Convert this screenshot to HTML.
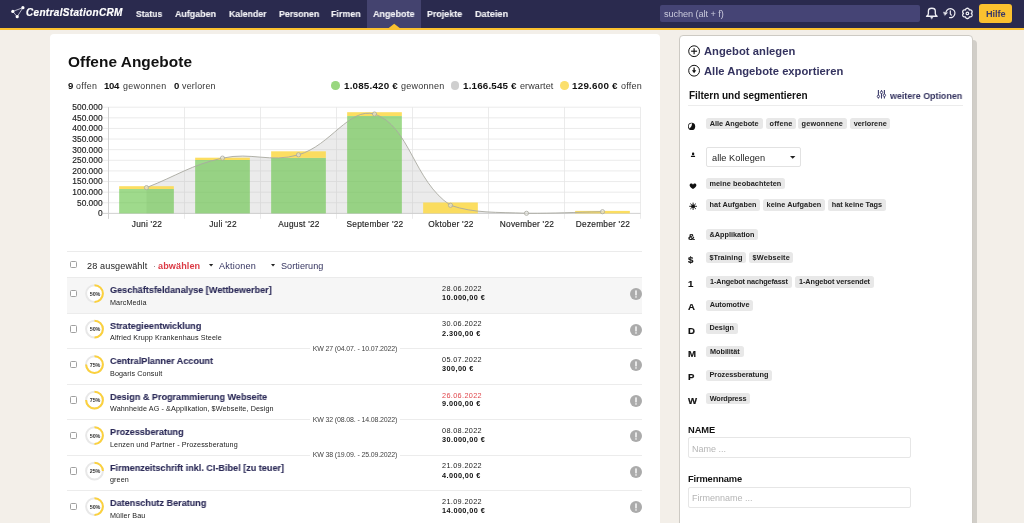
<!DOCTYPE html>
<html><head><meta charset="utf-8"><title>Offene Angebote</title>
<style>
html,body{margin:0;padding:0;}
body{width:1024px;height:523px;overflow:hidden;position:relative;background:#f3efe9;font-family:"Liberation Sans", sans-serif;}
.t{position:absolute;white-space:pre;line-height:normal;will-change:transform;}
.r{position:absolute;}
svg.r{overflow:visible;}
</style></head><body>
<div class="r" style="left:0px;top:0px;width:1024px;height:28px;background:#2a2a4e;"></div>
<div class="r" style="left:0px;top:28px;width:1024px;height:2px;background:#fbc12f;"></div>
<svg class="r" style="left:0;top:0" width="40" height="28" viewBox="0 0 40 28">
<g stroke="#d8d8e4" stroke-width="0.8" fill="none"><line x1="12.8" y1="11.4" x2="22.9" y2="7.7"/><line x1="12.8" y1="11.4" x2="17.2" y2="16.7"/><line x1="17.2" y1="16.7" x2="22.9" y2="7.7"/></g>
<g fill="#fff"><circle cx="12.8" cy="11.4" r="1.6"/><circle cx="22.9" cy="7.7" r="1.6"/><circle cx="17.2" cy="16.7" r="1.6"/></g></svg>
<div class="t" style="left:26px;top:7px;font-size:10px;font-weight:bold;color:#fff;font-style:italic;letter-spacing:0.326px;-webkit-text-stroke:0.2px #fff;">CentralStationCRM</div>
<div class="r" style="left:367px;top:0px;width:54px;height:28px;background:#44436f;"></div>
<svg class="r" style="left:388px;top:23px" width="13" height="6" viewBox="0 0 13 6"><polygon points="0.4,5.2 6.2,0.7 12,5.2" fill="#fbc12f"/></svg>
<div class="t" style="left:135.9px;top:8px;font-size:9.8px;font-weight:bold;color:#f2f2f6;font-style:normal;-webkit-text-stroke:0.15px #f2f2f6;transform:scaleX(0.8756);transform-origin:0.00px 0;">Status</div>
<div class="t" style="left:174.9px;top:8px;font-size:9.8px;font-weight:bold;color:#f2f2f6;font-style:normal;-webkit-text-stroke:0.15px #f2f2f6;transform:scaleX(0.9073);transform-origin:0.00px 0;">Aufgaben</div>
<div class="t" style="left:228.6px;top:8px;font-size:9.8px;font-weight:bold;color:#f2f2f6;font-style:normal;-webkit-text-stroke:0.15px #f2f2f6;transform:scaleX(0.8952);transform-origin:0.00px 0;">Kalender</div>
<div class="t" style="left:278.8px;top:8px;font-size:9.8px;font-weight:bold;color:#f2f2f6;font-style:normal;-webkit-text-stroke:0.15px #f2f2f6;transform:scaleX(0.9001);transform-origin:0.00px 0;">Personen</div>
<div class="t" style="left:331.3px;top:8px;font-size:9.8px;font-weight:bold;color:#f2f2f6;font-style:normal;-webkit-text-stroke:0.15px #f2f2f6;transform:scaleX(0.9089);transform-origin:0.00px 0;">Firmen</div>
<div class="t" style="left:373.1px;top:8px;font-size:9.8px;font-weight:bold;color:#f2f2f6;font-style:normal;-webkit-text-stroke:0.15px #f2f2f6;transform:scaleX(0.9186);transform-origin:0.00px 0;">Angebote</div>
<div class="t" style="left:427px;top:8px;font-size:9.8px;font-weight:bold;color:#f2f2f6;font-style:normal;-webkit-text-stroke:0.15px #f2f2f6;transform:scaleX(0.9079);transform-origin:0.00px 0;">Projekte</div>
<div class="t" style="left:474.9px;top:8px;font-size:9.8px;font-weight:bold;color:#f2f2f6;font-style:normal;-webkit-text-stroke:0.15px #f2f2f6;transform:scaleX(0.9349);transform-origin:0.00px 0;">Dateien</div>
<div class="r" style="left:660px;top:5px;width:260px;height:17px;background:#454475;border-radius:2px;"></div>
<div class="t" style="left:663.7px;top:9px;font-size:9.2px;font-weight:normal;color:#c9c9dc;font-style:normal;letter-spacing:-0.084px;">suchen (alt + f)</div>
<svg class="r" style="left:920px;top:0" width="60" height="28" viewBox="920 0 60 28">
<g stroke="#eeeef4" stroke-width="1.1" fill="none" stroke-linejoin="round" stroke-linecap="round">
<path d="M926.5 16.3 Q928.4 15.3 928.4 13.4 V10.9 Q928.4 8.2 931.85 8.2 Q935.3 8.2 935.3 10.9 V13.4 Q935.3 15.3 937.2 16.3 Z" stroke-width="1.35"/>
<polygon points="930.8,17.1 932.9,17.1 931.85,18.9" fill="#eeeef4" stroke-width="0.4"/>
<path d="M946.17 11.56 A4.5 4.5 0 1 1 949.6 17.53" stroke-width="1.25"/>
<polygon points="943.7,12.2 947.5,12.8 945.0,15.2" fill="#eeeef4" stroke-width="0.5"/>
<path d="M950.3 10.9 V13.8 L951.3 15.1" stroke-width="1.2"/>
<path d="M967.40 8.25 L967.53 8.26 L967.67 8.27 L967.80 8.30 L967.93 8.33 L968.06 8.38 L968.19 8.43 L968.31 8.49 L968.43 8.57 L968.54 8.65 L968.65 8.74 L968.75 8.83 L968.85 8.94 L968.94 9.05 L969.03 9.16 L969.11 9.28 L969.18 9.41 L969.24 9.54 L969.30 9.68 L969.34 9.82 L969.38 9.98 L969.53 9.93 L969.67 9.90 L969.82 9.88 L969.97 9.87 L970.11 9.87 L970.26 9.87 L970.40 9.89 L970.54 9.91 L970.68 9.94 L970.81 9.99 L970.95 10.04 L971.07 10.09 L971.19 10.16 L971.31 10.23 L971.42 10.32 L971.52 10.40 L971.62 10.50 L971.71 10.60 L971.79 10.71 L971.86 10.82 L971.92 10.94 L971.98 11.07 L972.02 11.20 L972.06 11.33 L972.08 11.46 L972.10 11.60 L972.10 11.73 L972.10 11.87 L972.09 12.01 L972.06 12.15 L972.03 12.29 L971.99 12.42 L971.94 12.56 L971.88 12.69 L971.82 12.82 L971.74 12.94 L971.66 13.06 L971.57 13.18 L971.47 13.29 L971.35 13.40 L971.47 13.51 L971.57 13.62 L971.66 13.74 L971.74 13.86 L971.82 13.98 L971.88 14.11 L971.94 14.24 L971.99 14.38 L972.03 14.51 L972.06 14.65 L972.09 14.79 L972.10 14.93 L972.10 15.07 L972.10 15.20 L972.08 15.34 L972.06 15.47 L972.02 15.60 L971.98 15.73 L971.92 15.86 L971.86 15.97 L971.79 16.09 L971.71 16.20 L971.62 16.30 L971.52 16.40 L971.42 16.48 L971.31 16.57 L971.19 16.64 L971.07 16.71 L970.95 16.76 L970.81 16.81 L970.68 16.86 L970.54 16.89 L970.40 16.91 L970.26 16.93 L970.11 16.93 L969.97 16.93 L969.82 16.92 L969.67 16.90 L969.53 16.87 L969.38 16.82 L969.34 16.98 L969.30 17.12 L969.24 17.26 L969.18 17.39 L969.11 17.52 L969.03 17.64 L968.94 17.75 L968.85 17.86 L968.75 17.97 L968.65 18.06 L968.54 18.15 L968.43 18.23 L968.31 18.31 L968.19 18.37 L968.06 18.42 L967.93 18.47 L967.80 18.50 L967.67 18.53 L967.53 18.54 L967.40 18.55 L967.27 18.54 L967.13 18.53 L967.00 18.50 L966.87 18.47 L966.74 18.42 L966.61 18.37 L966.49 18.31 L966.37 18.23 L966.26 18.15 L966.15 18.06 L966.05 17.97 L965.95 17.86 L965.86 17.75 L965.77 17.64 L965.69 17.52 L965.62 17.39 L965.56 17.26 L965.50 17.12 L965.46 16.98 L965.42 16.82 L965.27 16.87 L965.13 16.90 L964.98 16.92 L964.83 16.93 L964.69 16.93 L964.54 16.93 L964.40 16.91 L964.26 16.89 L964.12 16.86 L963.99 16.81 L963.85 16.76 L963.73 16.71 L963.61 16.64 L963.49 16.57 L963.38 16.48 L963.28 16.40 L963.18 16.30 L963.09 16.20 L963.01 16.09 L962.94 15.98 L962.88 15.86 L962.82 15.73 L962.78 15.60 L962.74 15.47 L962.72 15.34 L962.70 15.20 L962.70 15.07 L962.70 14.93 L962.71 14.79 L962.74 14.65 L962.77 14.51 L962.81 14.38 L962.86 14.24 L962.92 14.11 L962.98 13.98 L963.06 13.86 L963.14 13.74 L963.23 13.62 L963.33 13.51 L963.45 13.40 L963.33 13.29 L963.23 13.18 L963.14 13.06 L963.06 12.94 L962.98 12.82 L962.92 12.69 L962.86 12.56 L962.81 12.42 L962.77 12.29 L962.74 12.15 L962.71 12.01 L962.70 11.87 L962.70 11.73 L962.70 11.60 L962.72 11.46 L962.74 11.33 L962.78 11.20 L962.82 11.07 L962.88 10.94 L962.94 10.82 L963.01 10.71 L963.09 10.60 L963.18 10.50 L963.28 10.40 L963.38 10.32 L963.49 10.23 L963.61 10.16 L963.73 10.09 L963.85 10.04 L963.99 9.99 L964.12 9.94 L964.26 9.91 L964.40 9.89 L964.54 9.87 L964.69 9.87 L964.83 9.87 L964.98 9.88 L965.13 9.90 L965.27 9.93 L965.42 9.98 L965.46 9.82 L965.50 9.68 L965.56 9.54 L965.62 9.41 L965.69 9.28 L965.77 9.16 L965.86 9.05 L965.95 8.94 L966.05 8.83 L966.15 8.74 L966.26 8.65 L966.37 8.57 L966.49 8.49 L966.61 8.43 L966.74 8.38 L966.87 8.33 L967.00 8.30 L967.13 8.27 L967.27 8.26 Z" stroke-width="1.3"/>
<circle cx="967.4" cy="13.4" r="1.3" stroke-width="1.2"/>
</g></svg>
<div class="r" style="left:979px;top:4px;width:33px;height:19px;background:#fbc12f;border-radius:3px;"></div>
<div class="t" style="left:985.7px;top:9px;font-size:9.2px;font-weight:bold;color:#3a3a68;font-style:normal;letter-spacing:-0.1px;">Hilfe</div>
<div class="r" style="left:49.5px;top:34px;width:610.5px;height:520px;background:#fff;border-radius:4px;"></div>
<div class="t" style="left:67.8px;top:53px;font-size:15.4px;font-weight:bold;color:#111;font-style:normal;letter-spacing:0.041px;">Offene Angebote</div>
<div class="t" style="left:67.9px;top:80px;font-size:9.6px;font-weight:bold;color:#111;font-style:normal;letter-spacing:0.1px;">9</div>
<div class="t" style="left:75.7px;top:81px;font-size:8.9px;font-weight:normal;color:#333;font-style:normal;letter-spacing:0.364px;">offen</div>
<div class="t" style="left:103.8px;top:80px;font-size:9.6px;font-weight:bold;color:#111;font-style:normal;letter-spacing:-0.286px;">104</div>
<div class="t" style="left:123.4px;top:81px;font-size:8.9px;font-weight:normal;color:#333;font-style:normal;letter-spacing:0.311px;">gewonnen</div>
<div class="t" style="left:173.6px;top:80px;font-size:9.6px;font-weight:bold;color:#111;font-style:normal;letter-spacing:0.1px;">0</div>
<div class="t" style="left:181.8px;top:81px;font-size:8.9px;font-weight:normal;color:#333;font-style:normal;letter-spacing:0.21px;">verloren</div>
<div class="r" style="left:331.25px;top:81.35px;width:8.5px;height:8.5px;background:#99d77f;border-radius:50%;"></div>
<div class="r" style="left:450.6px;top:81.35px;width:8.5px;height:8.5px;background:#cfcfcf;border-radius:50%;"></div>
<div class="r" style="left:559.9px;top:81.35px;width:8.7px;height:8.5px;background:#fbdf6c;border-radius:50%;"></div>
<div class="t" style="left:343.75px;top:80px;font-size:9.8px;font-weight:bold;color:#111;font-style:normal;letter-spacing:0.194px;">1.085.420 €</div>
<div class="t" style="left:400.8px;top:81px;font-size:9.0px;font-weight:normal;color:#333;font-style:normal;letter-spacing:0.238px;">gewonnen</div>
<div class="t" style="left:462.6px;top:80px;font-size:9.8px;font-weight:bold;color:#111;font-style:normal;letter-spacing:0.179px;">1.166.545 €</div>
<div class="t" style="left:520px;top:81px;font-size:9.0px;font-weight:normal;color:#333;font-style:normal;letter-spacing:0.106px;">erwartet</div>
<div class="t" style="left:571.7px;top:80px;font-size:9.8px;font-weight:bold;color:#111;font-style:normal;letter-spacing:0.246px;">129.600 €</div>
<div class="t" style="left:620.6px;top:81px;font-size:9.0px;font-weight:normal;color:#333;font-style:normal;letter-spacing:0.2px;">offen</div>
<svg class="r" style="left:0;top:0" width="660" height="240" viewBox="0 0 660 240"><line x1="103" y1="213.40" x2="640.5" y2="213.40" stroke="#e6e6e6" stroke-width="0.8"/><line x1="103" y1="202.78" x2="640.5" y2="202.78" stroke="#e6e6e6" stroke-width="0.8"/><line x1="103" y1="192.16" x2="640.5" y2="192.16" stroke="#e6e6e6" stroke-width="0.8"/><line x1="103" y1="181.54" x2="640.5" y2="181.54" stroke="#e6e6e6" stroke-width="0.8"/><line x1="103" y1="170.92" x2="640.5" y2="170.92" stroke="#e6e6e6" stroke-width="0.8"/><line x1="103" y1="160.30" x2="640.5" y2="160.30" stroke="#e6e6e6" stroke-width="0.8"/><line x1="103" y1="149.68" x2="640.5" y2="149.68" stroke="#e6e6e6" stroke-width="0.8"/><line x1="103" y1="139.06" x2="640.5" y2="139.06" stroke="#e6e6e6" stroke-width="0.8"/><line x1="103" y1="128.44" x2="640.5" y2="128.44" stroke="#e6e6e6" stroke-width="0.8"/><line x1="103" y1="117.82" x2="640.5" y2="117.82" stroke="#e6e6e6" stroke-width="0.8"/><line x1="103" y1="107.20" x2="640.5" y2="107.20" stroke="#e6e6e6" stroke-width="0.8"/><line x1="108.50" y1="107.20" x2="108.50" y2="218.8" stroke="#e6e6e6" stroke-width="0.8"/><line x1="184.50" y1="107.20" x2="184.50" y2="218.8" stroke="#e6e6e6" stroke-width="0.8"/><line x1="260.50" y1="107.20" x2="260.50" y2="218.8" stroke="#e6e6e6" stroke-width="0.8"/><line x1="336.50" y1="107.20" x2="336.50" y2="218.8" stroke="#e6e6e6" stroke-width="0.8"/><line x1="412.50" y1="107.20" x2="412.50" y2="218.8" stroke="#e6e6e6" stroke-width="0.8"/><line x1="488.50" y1="107.20" x2="488.50" y2="218.8" stroke="#e6e6e6" stroke-width="0.8"/><line x1="564.50" y1="107.20" x2="564.50" y2="218.8" stroke="#e6e6e6" stroke-width="0.8"/><line x1="640.50" y1="107.20" x2="640.50" y2="218.8" stroke="#e6e6e6" stroke-width="0.8"/><line x1="108.5" y1="107.2" x2="108.5" y2="218.8" stroke="#cfcfcf" stroke-width="0.9"/><line x1="103" y1="213.4" x2="640.5" y2="213.4" stroke="#cfcfcf" stroke-width="0.9"/><path d="M146.50 187.60 C176.90 175.80 191.05 164.89 222.50 158.10 C251.85 151.77 270.01 163.07 298.50 154.80 C330.81 145.43 348.92 107.20 374.50 114.00 C409.72 125.70 413.50 181.13 450.50 205.30 C474.30 213.40 496.02 212.02 526.50 213.30 C556.82 213.40 572.10 212.34 602.50 211.70 L602.50 213.4 L146.50 213.4 Z" fill="rgb(190,190,190)" fill-opacity="0.3"/><rect x="119.15" y="189" width="54.7" height="24.40" fill="rgb(100,196,70)" fill-opacity="0.62"/><rect x="119.15" y="186.2" width="54.7" height="2.80" fill="rgb(252,218,80)" fill-opacity="0.9"/><rect x="195.15" y="160" width="54.7" height="53.40" fill="rgb(100,196,70)" fill-opacity="0.62"/><rect x="195.15" y="157.7" width="54.7" height="2.30" fill="rgb(252,218,80)" fill-opacity="0.9"/><rect x="271.15" y="157.9" width="54.7" height="55.50" fill="rgb(100,196,70)" fill-opacity="0.62"/><rect x="271.15" y="151.3" width="54.7" height="6.60" fill="rgb(252,218,80)" fill-opacity="0.9"/><rect x="347.15" y="116" width="54.7" height="97.40" fill="rgb(100,196,70)" fill-opacity="0.62"/><rect x="347.15" y="112.2" width="54.7" height="3.80" fill="rgb(252,218,80)" fill-opacity="0.9"/><rect x="423.15" y="202.5" width="54.7" height="10.90" fill="rgb(252,218,80)" fill-opacity="0.9"/><rect x="575.15" y="210.9" width="54.7" height="2.50" fill="rgb(252,218,80)" fill-opacity="0.9"/><path d="M146.50 187.60 C176.90 175.80 191.05 164.89 222.50 158.10 C251.85 151.77 270.01 163.07 298.50 154.80 C330.81 145.43 348.92 107.20 374.50 114.00 C409.72 125.70 413.50 181.13 450.50 205.30 C474.30 213.40 496.02 212.02 526.50 213.30 C556.82 213.40 572.10 212.34 602.50 211.70" fill="none" stroke="#a9a9a0" stroke-width="0.9"/><circle cx="146.50" cy="187.60" r="2.1" fill="rgba(230,230,225,0.6)" stroke="#a9a9a0" stroke-width="0.8"/><circle cx="222.50" cy="158.10" r="2.1" fill="rgba(230,230,225,0.6)" stroke="#a9a9a0" stroke-width="0.8"/><circle cx="298.50" cy="154.80" r="2.1" fill="rgba(230,230,225,0.6)" stroke="#a9a9a0" stroke-width="0.8"/><circle cx="374.50" cy="114.00" r="2.1" fill="rgba(230,230,225,0.6)" stroke="#a9a9a0" stroke-width="0.8"/><circle cx="450.50" cy="205.30" r="2.1" fill="rgba(230,230,225,0.6)" stroke="#a9a9a0" stroke-width="0.8"/><circle cx="526.50" cy="213.30" r="2.1" fill="rgba(230,230,225,0.6)" stroke="#a9a9a0" stroke-width="0.8"/><circle cx="602.50" cy="211.70" r="2.1" fill="rgba(230,230,225,0.6)" stroke="#a9a9a0" stroke-width="0.8"/></svg>
<div class="t" style="left:0px;top:208px;width:102.6px;text-align:right;font-size:8.4px;font-weight:normal;color:#222;font-style:normal;-webkit-text-stroke:0.15px #222;">0</div>
<div class="t" style="left:0px;top:198px;width:102.6px;text-align:right;font-size:8.4px;font-weight:normal;color:#222;font-style:normal;-webkit-text-stroke:0.15px #222;">50.000</div>
<div class="t" style="left:0px;top:187px;width:102.6px;text-align:right;font-size:8.4px;font-weight:normal;color:#222;font-style:normal;-webkit-text-stroke:0.15px #222;">100.000</div>
<div class="t" style="left:0px;top:176px;width:102.6px;text-align:right;font-size:8.4px;font-weight:normal;color:#222;font-style:normal;-webkit-text-stroke:0.15px #222;">150.000</div>
<div class="t" style="left:0px;top:166px;width:102.6px;text-align:right;font-size:8.4px;font-weight:normal;color:#222;font-style:normal;-webkit-text-stroke:0.15px #222;">200.000</div>
<div class="t" style="left:0px;top:155px;width:102.6px;text-align:right;font-size:8.4px;font-weight:normal;color:#222;font-style:normal;-webkit-text-stroke:0.15px #222;">250.000</div>
<div class="t" style="left:0px;top:145px;width:102.6px;text-align:right;font-size:8.4px;font-weight:normal;color:#222;font-style:normal;-webkit-text-stroke:0.15px #222;">300.000</div>
<div class="t" style="left:0px;top:134px;width:102.6px;text-align:right;font-size:8.4px;font-weight:normal;color:#222;font-style:normal;-webkit-text-stroke:0.15px #222;">350.000</div>
<div class="t" style="left:0px;top:123px;width:102.6px;text-align:right;font-size:8.4px;font-weight:normal;color:#222;font-style:normal;-webkit-text-stroke:0.15px #222;">400.000</div>
<div class="t" style="left:0px;top:113px;width:102.6px;text-align:right;font-size:8.4px;font-weight:normal;color:#222;font-style:normal;-webkit-text-stroke:0.15px #222;">450.000</div>
<div class="t" style="left:0px;top:102px;width:102.6px;text-align:right;font-size:8.4px;font-weight:normal;color:#222;font-style:normal;-webkit-text-stroke:0.15px #222;">500.000</div>
<div class="t" style="left:96.5px;top:219px;width:100px;text-align:center;font-size:8.3px;font-weight:normal;color:#222;font-style:normal;letter-spacing:0.25px;-webkit-text-stroke:0.15px #222;">Juni &#x27;22</div>
<div class="t" style="left:172.5px;top:219px;width:100px;text-align:center;font-size:8.3px;font-weight:normal;color:#222;font-style:normal;letter-spacing:0.25px;-webkit-text-stroke:0.15px #222;">Juli &#x27;22</div>
<div class="t" style="left:248.5px;top:219px;width:100px;text-align:center;font-size:8.3px;font-weight:normal;color:#222;font-style:normal;letter-spacing:0.25px;-webkit-text-stroke:0.15px #222;">August &#x27;22</div>
<div class="t" style="left:324.5px;top:219px;width:100px;text-align:center;font-size:8.3px;font-weight:normal;color:#222;font-style:normal;letter-spacing:0.25px;-webkit-text-stroke:0.15px #222;">September &#x27;22</div>
<div class="t" style="left:400.5px;top:219px;width:100px;text-align:center;font-size:8.3px;font-weight:normal;color:#222;font-style:normal;letter-spacing:0.25px;-webkit-text-stroke:0.15px #222;">Oktober &#x27;22</div>
<div class="t" style="left:476.5px;top:219px;width:100px;text-align:center;font-size:8.3px;font-weight:normal;color:#222;font-style:normal;letter-spacing:0.25px;-webkit-text-stroke:0.15px #222;">November &#x27;22</div>
<div class="t" style="left:552.5px;top:219px;width:100px;text-align:center;font-size:8.3px;font-weight:normal;color:#222;font-style:normal;letter-spacing:0.25px;-webkit-text-stroke:0.15px #222;">Dezember &#x27;22</div>
<div class="r" style="left:66.8px;top:251.3px;width:575px;height:1px;background:#ebebeb;"></div>
<div class="r" style="left:66.8px;top:276.5px;width:575px;height:1px;background:#ebebeb;"></div>
<div class="r" style="left:69.9px;top:261.2px;width:7.4px;height:7.2px;background:#fff;border:1px solid #a0a0a0;border-radius:1.5px;box-sizing:border-box;"></div>
<div class="t" style="left:87.3px;top:261px;font-size:9.1px;font-weight:normal;color:#222;font-style:normal;letter-spacing:0.132px;">28 ausgewählt</div>
<div class="t" style="left:153.0px;top:261px;font-size:9.1px;font-weight:normal;color:#888;font-style:normal;">·</div>
<div class="t" style="left:158.4px;top:261px;font-size:9.1px;font-weight:bold;color:#db3a45;font-style:normal;letter-spacing:0.103px;">abwählen</div>
<svg class="r" style="left:208.9px;top:264.4px" width="4.2" height="2.6" viewBox="0 0 4.2 2.6"><polygon points="0,0 4.2,0 2.1,2.6" fill="#222"/></svg>
<div class="t" style="left:219.0px;top:261px;font-size:9.1px;font-weight:normal;color:#34335f;font-style:normal;letter-spacing:0.21px;">Aktionen</div>
<svg class="r" style="left:270.5px;top:264.4px" width="4.1" height="2.6" viewBox="0 0 4.1 2.6"><polygon points="0,0 4.1,0 2.05,2.6" fill="#222"/></svg>
<div class="t" style="left:281.0px;top:261px;font-size:9.1px;font-weight:normal;color:#34335f;font-style:normal;letter-spacing:0.045px;">Sortierung</div>
<div class="r" style="left:66.8px;top:277.5px;width:575px;height:36px;background:#f6f6f6;"></div>
<div class="r" style="left:69.7px;top:289.9px;width:7.4px;height:7.2px;background:#fff;border:1px solid #a0a0a0;border-radius:1.5px;box-sizing:border-box;"></div>
<svg class="r" style="left:0;top:0" width="1" height="1"><circle cx="94.5" cy="293.60" r="8.4" fill="#fff" stroke="#e8e8e8" stroke-width="2"/><path d="M94.50 285.20 A8.4 8.4 0 0 1 94.50 302.00" fill="none" stroke="#fcd13c" stroke-width="2"/></svg>
<div class="t" style="left:84.5px;top:291px;width:20px;text-align:center;font-size:5.4px;font-weight:bold;color:#333;font-style:normal;letter-spacing:-0.15px;">50%</div>
<div class="t" style="left:110.0px;top:284px;font-size:9.6px;font-weight:bold;color:#2c2b58;font-style:normal;transform:scaleX(0.946);transform-origin:0 0;-webkit-text-stroke:0.12px #2c2b58;">Geschäftsfeldanalyse [Wettbewerber]</div>
<div class="t" style="left:110.2px;top:298px;font-size:7.2px;font-weight:normal;color:#222;font-style:normal;letter-spacing:0.11px;">MarcMedia</div>
<div class="t" style="left:441.9px;top:284px;font-size:7.3px;font-weight:normal;color:#222;font-style:normal;letter-spacing:0.35px;">28.06.2022</div>
<div class="t" style="left:441.9px;top:293px;font-size:7.3px;font-weight:bold;color:#111;font-style:normal;letter-spacing:0.42px;">10.000,00 €</div>
<svg class="r" style="left:629px;top:287.20px" width="14" height="14" viewBox="0 0 14 14"><circle cx="7" cy="7" r="6" fill="#ababab"/><rect x="6.3" y="3.4" width="1.4" height="5" fill="#fff"/><rect x="6.3" y="9.3" width="1.4" height="1.3" fill="#fff"/></svg>
<div class="r" style="left:66.8px;top:312.5px;width:575px;height:1px;background:#ececec;"></div>
<div class="r" style="left:69.7px;top:325.4px;width:7.4px;height:7.2px;background:#fff;border:1px solid #a0a0a0;border-radius:1.5px;box-sizing:border-box;"></div>
<svg class="r" style="left:0;top:0" width="1" height="1"><circle cx="94.5" cy="329.10" r="8.4" fill="#fff" stroke="#e8e8e8" stroke-width="2"/><path d="M94.50 320.70 A8.4 8.4 0 0 1 94.50 337.50" fill="none" stroke="#fcd13c" stroke-width="2"/></svg>
<div class="t" style="left:84.5px;top:326px;width:20px;text-align:center;font-size:5.4px;font-weight:bold;color:#333;font-style:normal;letter-spacing:-0.15px;">50%</div>
<div class="t" style="left:110.0px;top:320px;font-size:9.6px;font-weight:bold;color:#2c2b58;font-style:normal;transform:scaleX(0.946);transform-origin:0 0;-webkit-text-stroke:0.12px #2c2b58;">Strategieentwicklung</div>
<div class="t" style="left:110.2px;top:333px;font-size:7.2px;font-weight:normal;color:#222;font-style:normal;letter-spacing:0.11px;">Alfried Krupp Krankenhaus Steele</div>
<div class="t" style="left:441.9px;top:319px;font-size:7.3px;font-weight:normal;color:#222;font-style:normal;letter-spacing:0.35px;">30.06.2022</div>
<div class="t" style="left:441.9px;top:329px;font-size:7.3px;font-weight:bold;color:#111;font-style:normal;letter-spacing:0.42px;">2.300,00 €</div>
<svg class="r" style="left:629px;top:322.70px" width="14" height="14" viewBox="0 0 14 14"><circle cx="7" cy="7" r="6" fill="#ababab"/><rect x="6.3" y="3.4" width="1.4" height="5" fill="#fff"/><rect x="6.3" y="9.3" width="1.4" height="1.3" fill="#fff"/></svg>
<div class="r" style="left:66.8px;top:348.0px;width:575px;height:1px;background:#ececec;"></div>
<div class="r" style="left:69.7px;top:360.9px;width:7.4px;height:7.2px;background:#fff;border:1px solid #a0a0a0;border-radius:1.5px;box-sizing:border-box;"></div>
<svg class="r" style="left:0;top:0" width="1" height="1"><circle cx="94.5" cy="364.60" r="8.4" fill="#fff" stroke="#e8e8e8" stroke-width="2"/><path d="M94.50 356.20 A8.4 8.4 0 1 1 86.10 364.60" fill="none" stroke="#fcd13c" stroke-width="2"/></svg>
<div class="t" style="left:84.5px;top:362px;width:20px;text-align:center;font-size:5.4px;font-weight:bold;color:#333;font-style:normal;letter-spacing:-0.15px;">75%</div>
<div class="t" style="left:110.0px;top:355px;font-size:9.6px;font-weight:bold;color:#2c2b58;font-style:normal;transform:scaleX(0.946);transform-origin:0 0;-webkit-text-stroke:0.12px #2c2b58;">CentralPlanner Account</div>
<div class="t" style="left:110.2px;top:369px;font-size:7.2px;font-weight:normal;color:#222;font-style:normal;letter-spacing:0.11px;">Bogaris Consult</div>
<div class="t" style="left:441.9px;top:355px;font-size:7.3px;font-weight:normal;color:#222;font-style:normal;letter-spacing:0.35px;">05.07.2022</div>
<div class="t" style="left:441.9px;top:364px;font-size:7.3px;font-weight:bold;color:#111;font-style:normal;letter-spacing:0.42px;">300,00 €</div>
<svg class="r" style="left:629px;top:358.20px" width="14" height="14" viewBox="0 0 14 14"><circle cx="7" cy="7" r="6" fill="#ababab"/><rect x="6.3" y="3.4" width="1.4" height="5" fill="#fff"/><rect x="6.3" y="9.3" width="1.4" height="1.3" fill="#fff"/></svg>
<div class="r" style="left:66.8px;top:383.5px;width:575px;height:1px;background:#ececec;"></div>
<div class="r" style="left:69.7px;top:396.4px;width:7.4px;height:7.2px;background:#fff;border:1px solid #a0a0a0;border-radius:1.5px;box-sizing:border-box;"></div>
<svg class="r" style="left:0;top:0" width="1" height="1"><circle cx="94.5" cy="400.10" r="8.4" fill="#fff" stroke="#e8e8e8" stroke-width="2"/><path d="M94.50 391.70 A8.4 8.4 0 1 1 86.10 400.10" fill="none" stroke="#fcd13c" stroke-width="2"/></svg>
<div class="t" style="left:84.5px;top:397px;width:20px;text-align:center;font-size:5.4px;font-weight:bold;color:#333;font-style:normal;letter-spacing:-0.15px;">75%</div>
<div class="t" style="left:110.0px;top:391px;font-size:9.6px;font-weight:bold;color:#2c2b58;font-style:normal;transform:scaleX(0.946);transform-origin:0 0;-webkit-text-stroke:0.12px #2c2b58;">Design &amp; Programmierung Webseite</div>
<div class="t" style="left:110.2px;top:404px;font-size:7.2px;font-weight:normal;color:#222;font-style:normal;letter-spacing:0.11px;">Wahnheide AG - &amp;Applikation, $Webseite, Design</div>
<div class="t" style="left:441.9px;top:391px;font-size:7.3px;font-weight:normal;color:#e0474c;font-style:normal;letter-spacing:0.35px;">26.06.2022</div>
<div class="t" style="left:441.9px;top:399px;font-size:7.3px;font-weight:bold;color:#111;font-style:normal;letter-spacing:0.42px;">9.000,00 €</div>
<svg class="r" style="left:629px;top:393.70px" width="14" height="14" viewBox="0 0 14 14"><circle cx="7" cy="7" r="6" fill="#ababab"/><rect x="6.3" y="3.4" width="1.4" height="5" fill="#fff"/><rect x="6.3" y="9.3" width="1.4" height="1.3" fill="#fff"/></svg>
<div class="r" style="left:66.8px;top:419.0px;width:575px;height:1px;background:#ececec;"></div>
<div class="r" style="left:69.7px;top:431.9px;width:7.4px;height:7.2px;background:#fff;border:1px solid #a0a0a0;border-radius:1.5px;box-sizing:border-box;"></div>
<svg class="r" style="left:0;top:0" width="1" height="1"><circle cx="94.5" cy="435.60" r="8.4" fill="#fff" stroke="#e8e8e8" stroke-width="2"/><path d="M94.50 427.20 A8.4 8.4 0 0 1 94.50 444.00" fill="none" stroke="#fcd13c" stroke-width="2"/></svg>
<div class="t" style="left:84.5px;top:433px;width:20px;text-align:center;font-size:5.4px;font-weight:bold;color:#333;font-style:normal;letter-spacing:-0.15px;">50%</div>
<div class="t" style="left:110.0px;top:426px;font-size:9.6px;font-weight:bold;color:#2c2b58;font-style:normal;transform:scaleX(0.946);transform-origin:0 0;-webkit-text-stroke:0.12px #2c2b58;">Prozessberatung</div>
<div class="t" style="left:110.2px;top:440px;font-size:7.2px;font-weight:normal;color:#222;font-style:normal;letter-spacing:0.11px;">Lenzen und Partner - Prozessberatung</div>
<div class="t" style="left:441.9px;top:426px;font-size:7.3px;font-weight:normal;color:#222;font-style:normal;letter-spacing:0.35px;">08.08.2022</div>
<div class="t" style="left:441.9px;top:435px;font-size:7.3px;font-weight:bold;color:#111;font-style:normal;letter-spacing:0.42px;">30.000,00 €</div>
<svg class="r" style="left:629px;top:429.20px" width="14" height="14" viewBox="0 0 14 14"><circle cx="7" cy="7" r="6" fill="#ababab"/><rect x="6.3" y="3.4" width="1.4" height="5" fill="#fff"/><rect x="6.3" y="9.3" width="1.4" height="1.3" fill="#fff"/></svg>
<div class="r" style="left:66.8px;top:454.5px;width:575px;height:1px;background:#ececec;"></div>
<div class="r" style="left:69.7px;top:467.4px;width:7.4px;height:7.2px;background:#fff;border:1px solid #a0a0a0;border-radius:1.5px;box-sizing:border-box;"></div>
<svg class="r" style="left:0;top:0" width="1" height="1"><circle cx="94.5" cy="471.10" r="8.4" fill="#fff" stroke="#e8e8e8" stroke-width="2"/><path d="M94.50 462.70 A8.4 8.4 0 0 1 102.90 471.10" fill="none" stroke="#fcd13c" stroke-width="2"/></svg>
<div class="t" style="left:84.5px;top:468px;width:20px;text-align:center;font-size:5.4px;font-weight:bold;color:#333;font-style:normal;letter-spacing:-0.15px;">25%</div>
<div class="t" style="left:110.0px;top:462px;font-size:9.6px;font-weight:bold;color:#2c2b58;font-style:normal;transform:scaleX(0.946);transform-origin:0 0;-webkit-text-stroke:0.12px #2c2b58;">Firmenzeitschrift inkl. CI-Bibel [zu teuer]</div>
<div class="t" style="left:110.2px;top:475px;font-size:7.2px;font-weight:normal;color:#222;font-style:normal;letter-spacing:0.11px;">green</div>
<div class="t" style="left:441.9px;top:461px;font-size:7.3px;font-weight:normal;color:#222;font-style:normal;letter-spacing:0.35px;">21.09.2022</div>
<div class="t" style="left:441.9px;top:471px;font-size:7.3px;font-weight:bold;color:#111;font-style:normal;letter-spacing:0.42px;">4.000,00 €</div>
<svg class="r" style="left:629px;top:464.70px" width="14" height="14" viewBox="0 0 14 14"><circle cx="7" cy="7" r="6" fill="#ababab"/><rect x="6.3" y="3.4" width="1.4" height="5" fill="#fff"/><rect x="6.3" y="9.3" width="1.4" height="1.3" fill="#fff"/></svg>
<div class="r" style="left:66.8px;top:490.0px;width:575px;height:1px;background:#ececec;"></div>
<div class="r" style="left:69.7px;top:502.9px;width:7.4px;height:7.2px;background:#fff;border:1px solid #a0a0a0;border-radius:1.5px;box-sizing:border-box;"></div>
<svg class="r" style="left:0;top:0" width="1" height="1"><circle cx="94.5" cy="506.60" r="8.4" fill="#fff" stroke="#e8e8e8" stroke-width="2"/><path d="M94.50 498.20 A8.4 8.4 0 0 1 94.50 515.00" fill="none" stroke="#fcd13c" stroke-width="2"/></svg>
<div class="t" style="left:84.5px;top:504px;width:20px;text-align:center;font-size:5.4px;font-weight:bold;color:#333;font-style:normal;letter-spacing:-0.15px;">50%</div>
<div class="t" style="left:110.0px;top:497px;font-size:9.6px;font-weight:bold;color:#2c2b58;font-style:normal;transform:scaleX(0.946);transform-origin:0 0;-webkit-text-stroke:0.12px #2c2b58;">Datenschutz Beratung</div>
<div class="t" style="left:110.2px;top:511px;font-size:7.2px;font-weight:normal;color:#222;font-style:normal;letter-spacing:0.11px;">Müller Bau</div>
<div class="t" style="left:441.9px;top:497px;font-size:7.3px;font-weight:normal;color:#222;font-style:normal;letter-spacing:0.35px;">21.09.2022</div>
<div class="t" style="left:441.9px;top:506px;font-size:7.3px;font-weight:bold;color:#111;font-style:normal;letter-spacing:0.42px;">14.000,00 €</div>
<svg class="r" style="left:629px;top:500.20px" width="14" height="14" viewBox="0 0 14 14"><circle cx="7" cy="7" r="6" fill="#ababab"/><rect x="6.3" y="3.4" width="1.4" height="5" fill="#fff"/><rect x="6.3" y="9.3" width="1.4" height="1.3" fill="#fff"/></svg>
<div class="r" style="left:309.8px;top:346.0px;width:89.8px;height:4px;background:#fff;"></div>
<div class="t" style="left:254.5px;top:345px;width:200px;text-align:center;font-size:7px;font-weight:normal;color:#444;font-style:normal;letter-spacing:-0.14px;">KW 27 (04.07. - 10.07.2022)</div>
<div class="r" style="left:309.8px;top:417.0px;width:89.8px;height:4px;background:#fff;"></div>
<div class="t" style="left:254.5px;top:416px;width:200px;text-align:center;font-size:7px;font-weight:normal;color:#444;font-style:normal;letter-spacing:-0.14px;">KW 32 (08.08. - 14.08.2022)</div>
<div class="r" style="left:309.8px;top:452.5px;width:89.8px;height:4px;background:#fff;"></div>
<div class="t" style="left:254.5px;top:451px;width:200px;text-align:center;font-size:7px;font-weight:normal;color:#444;font-style:normal;letter-spacing:-0.14px;">KW 38 (19.09. - 25.09.2022)</div>
<div class="r" style="left:678.5px;top:34.5px;width:294.5px;height:520px;background:#fff;border:1px solid #cdcac4;border-top-width:1.5px;border-radius:4px;box-sizing:border-box;box-shadow:4px 5px 0 #d1cec8"></div>
<svg class="r" style="left:686px;top:43px" width="16" height="36" viewBox="686 43 16 36">
<g fill="none" stroke="#111" stroke-width="1.0"><circle cx="694.1" cy="51.2" r="5.4"/><circle cx="694.1" cy="70.7" r="5.4"/>
<line x1="691.1" y1="51.2" x2="697.1" y2="51.2" stroke-width="1.15"/><line x1="694.1" y1="48.2" x2="694.1" y2="54.2" stroke-width="1.15"/>
<line x1="694.1" y1="67.6" x2="694.1" y2="71" stroke-width="1.3"/></g>
<polygon points="691.9,70.2 696.3,70.2 694.1,73.2" fill="#111"/></svg>
<div class="t" style="left:704.2px;top:45px;font-size:11.2px;font-weight:bold;color:#34335f;font-style:normal;letter-spacing:0.035px;">Angebot anlegen</div>
<div class="t" style="left:704.2px;top:65px;font-size:11.2px;font-weight:bold;color:#34335f;font-style:normal;letter-spacing:0.016px;">Alle Angebote exportieren</div>
<div class="t" style="left:688.9px;top:90px;font-size:10px;font-weight:bold;color:#111;font-style:normal;letter-spacing:-0.041px;">Filtern und segmentieren</div>
<div class="r" style="left:688px;top:105px;width:275px;height:1px;background:#ececec;"></div>
<svg class="r" style="left:874px;top:88px" width="14" height="13" viewBox="874 88 14 13">
<g stroke="#3c3b6b" stroke-width="1.1" fill="none"><line x1="878.4" y1="90.1" x2="878.4" y2="98.6"/><line x1="881.5" y1="90.1" x2="881.5" y2="98.6"/><line x1="884.4" y1="90.1" x2="884.4" y2="98.6"/></g>
<g fill="#fff" stroke="#3c3b6b" stroke-width="0.9"><circle cx="878.4" cy="96.4" r="1.2"/><circle cx="881.5" cy="92.4" r="1.2"/><circle cx="884.4" cy="95.3" r="1.2"/></g></svg>
<div class="t" style="left:890.1px;top:90px;font-size:9.5px;font-weight:bold;color:#34335f;font-style:normal;transform:scaleX(0.9379);transform-origin:-1.00px 0;">weitere Optionen</div>
<div class="r" style="left:706.2px;top:117.9px;width:56.4px;height:11.2px;background:#e8e8e8;border-radius:2.5px;"></div>
<div class="t" style="left:706.2px;top:119px;width:56.4px;text-align:center;font-size:7.3px;font-weight:bold;color:#222;font-style:normal;">Alle Angebote</div>
<div class="r" style="left:765.6px;top:117.9px;width:30.1px;height:11.2px;background:#e8e8e8;border-radius:2.5px;"></div>
<div class="t" style="left:765.6px;top:119px;width:30.1px;text-align:center;font-size:7.3px;font-weight:bold;color:#222;font-style:normal;letter-spacing:0.174px;">offene</div>
<div class="r" style="left:798.4px;top:117.9px;width:48.6px;height:11.2px;background:#e8e8e8;border-radius:2.5px;"></div>
<div class="t" style="left:798.4px;top:119px;width:48.6px;text-align:center;font-size:7.3px;font-weight:bold;color:#222;font-style:normal;letter-spacing:0.14px;">gewonnene</div>
<div class="r" style="left:850px;top:117.9px;width:40.4px;height:11.2px;background:#e8e8e8;border-radius:2.5px;"></div>
<div class="t" style="left:850px;top:119px;width:40.4px;text-align:center;font-size:7.3px;font-weight:bold;color:#222;font-style:normal;letter-spacing:0.026px;">verlorene</div>
<div class="r" style="left:705.7px;top:147.3px;width:95.8px;height:19.7px;background:#fff;border:1px solid #e2e2e2;border-radius:2px;box-sizing:border-box;"></div>
<div class="t" style="left:711.8px;top:153px;font-size:9.2px;font-weight:normal;color:#222;font-style:normal;letter-spacing:0.041px;">alle Kollegen</div>
<svg class="r" style="left:789.9px;top:155.9px" width="5.4" height="2.8" viewBox="0 0 5.4 2.8"><polygon points="0,0 5.4,0 2.7,2.8" fill="#222"/></svg>
<div class="r" style="left:705.8px;top:178px;width:78.8px;height:11.2px;background:#e8e8e8;border-radius:2.5px;"></div>
<div class="t" style="left:705.8px;top:179px;width:78.8px;text-align:center;font-size:7.3px;font-weight:bold;color:#222;font-style:normal;letter-spacing:0.077px;">meine beobachteten</div>
<div class="r" style="left:705.8px;top:199.4px;width:54.1px;height:11.2px;background:#e8e8e8;border-radius:2.5px;"></div>
<div class="t" style="left:705.8px;top:200px;width:54.1px;text-align:center;font-size:7.3px;font-weight:bold;color:#222;font-style:normal;letter-spacing:0.049px;">hat Aufgaben</div>
<div class="r" style="left:763.1px;top:199.4px;width:61.9px;height:11.2px;background:#e8e8e8;border-radius:2.5px;"></div>
<div class="t" style="left:763.1px;top:200px;width:61.9px;text-align:center;font-size:7.3px;font-weight:bold;color:#222;font-style:normal;letter-spacing:0.048px;">keine Aufgaben</div>
<div class="r" style="left:827.8px;top:199.4px;width:57.8px;height:11.2px;background:#e8e8e8;border-radius:2.5px;"></div>
<div class="t" style="left:827.8px;top:200px;width:57.8px;text-align:center;font-size:7.3px;font-weight:bold;color:#222;font-style:normal;letter-spacing:0.024px;">hat keine Tags</div>
<div class="r" style="left:705.8px;top:229.1px;width:52.0px;height:11.2px;background:#e8e8e8;border-radius:2.5px;"></div>
<div class="t" style="left:705.8px;top:230px;width:52.0px;text-align:center;font-size:7.3px;font-weight:bold;color:#222;font-style:normal;letter-spacing:0.006px;">&amp;Applikation</div>
<div class="r" style="left:705.8px;top:252.3px;width:39.9px;height:11.2px;background:#e8e8e8;border-radius:2.5px;"></div>
<div class="t" style="left:705.8px;top:253px;width:39.9px;text-align:center;font-size:7.3px;font-weight:bold;color:#222;font-style:normal;letter-spacing:0.065px;">$Training</div>
<div class="r" style="left:748.7px;top:252.3px;width:44.5px;height:11.2px;background:#e8e8e8;border-radius:2.5px;"></div>
<div class="t" style="left:748.7px;top:253px;width:44.5px;text-align:center;font-size:7.3px;font-weight:bold;color:#222;font-style:normal;letter-spacing:0.15px;">$Webseite</div>
<div class="r" style="left:706px;top:276.4px;width:85.9px;height:11.2px;background:#e8e8e8;border-radius:2.5px;"></div>
<div class="t" style="left:706px;top:277px;width:85.9px;text-align:center;font-size:7.3px;font-weight:bold;color:#222;font-style:normal;letter-spacing:-0.138px;">1-Angebot nachgefasst</div>
<div class="r" style="left:795.1px;top:276.4px;width:79.0px;height:11.2px;background:#e8e8e8;border-radius:2.5px;"></div>
<div class="t" style="left:795.1px;top:277px;width:79.0px;text-align:center;font-size:7.3px;font-weight:bold;color:#222;font-style:normal;letter-spacing:-0.086px;">1-Angebot versendet</div>
<div class="r" style="left:706px;top:299.6px;width:47.1px;height:11.2px;background:#e8e8e8;border-radius:2.5px;"></div>
<div class="t" style="left:706px;top:300px;width:47.1px;text-align:center;font-size:7.3px;font-weight:bold;color:#222;font-style:normal;letter-spacing:-0.042px;">Automotive</div>
<div class="r" style="left:706px;top:322.9px;width:31.5px;height:11.2px;background:#e8e8e8;border-radius:2.5px;"></div>
<div class="t" style="left:706px;top:323px;width:31.5px;text-align:center;font-size:7.3px;font-weight:bold;color:#222;font-style:normal;letter-spacing:0.046px;">Design</div>
<div class="r" style="left:706px;top:346.3px;width:37.7px;height:11.2px;background:#e8e8e8;border-radius:2.5px;"></div>
<div class="t" style="left:706px;top:347px;width:37.7px;text-align:center;font-size:7.3px;font-weight:bold;color:#222;font-style:normal;letter-spacing:-0.033px;">Mobilität</div>
<div class="r" style="left:706px;top:369.6px;width:65.8px;height:11.2px;background:#e8e8e8;border-radius:2.5px;"></div>
<div class="t" style="left:706px;top:370px;width:65.8px;text-align:center;font-size:7.3px;font-weight:bold;color:#222;font-style:normal;letter-spacing:-0.025px;">Prozessberatung</div>
<div class="r" style="left:706px;top:393.0px;width:44.1px;height:11.2px;background:#e8e8e8;border-radius:2.5px;"></div>
<div class="t" style="left:706px;top:394px;width:44.1px;text-align:center;font-size:7.3px;font-weight:bold;color:#222;font-style:normal;letter-spacing:-0.153px;">Wordpress</div>
<svg class="r" style="left:684px;top:115px" width="16" height="100" viewBox="684 115 16 100">
<circle cx="691.6" cy="126.4" r="3.6" fill="#111"/>
<path d="M692.2 123.3 Q689.2 123.4 688.7 126.1 Q688.8 127.9 689.7 128.6 Q692 126.8 692.2 123.3 Z" fill="#fff"/>
<rect x="692" y="152.6" width="2.2" height="2.6" rx="0.8" fill="#111"/>
<rect x="690.9" y="155.7" width="4.2" height="1.4" rx="0.5" fill="#111"/>
<path d="M693 189.1 C690.6 187.4 689.6 186.3 689.6 185.2 C689.6 184.2 690.4 183.6 691.3 183.6 C692.1 183.6 692.7 184.1 693 184.7 C693.3 184.1 693.9 183.6 694.7 183.6 C695.6 183.6 696.4 184.2 696.4 185.2 C696.4 186.3 695.4 187.4 693 189.1 Z" fill="#111"/>
<g stroke="#111" stroke-width="0.9"><line x1="689.2" y1="206.3" x2="697" y2="206.3"/><line x1="693.1" y1="202.6" x2="693.1" y2="210"/><line x1="690.3" y1="203.6" x2="695.9" y2="209"/><line x1="695.9" y1="203.6" x2="690.3" y2="209"/></g>
<circle cx="693.1" cy="206.3" r="1.8" fill="#111"/>
</svg>
<div class="t" style="left:688.2px;top:231px;font-size:9.6px;font-weight:bold;color:#111;font-style:normal;-webkit-text-stroke:0.2px #111;">&amp;</div>
<div class="t" style="left:688.2px;top:254px;font-size:9.6px;font-weight:bold;color:#111;font-style:normal;-webkit-text-stroke:0.2px #111;">$</div>
<div class="t" style="left:688.2px;top:278px;font-size:9.6px;font-weight:bold;color:#111;font-style:normal;-webkit-text-stroke:0.2px #111;">1</div>
<div class="t" style="left:688.2px;top:301px;font-size:9.6px;font-weight:bold;color:#111;font-style:normal;-webkit-text-stroke:0.2px #111;">A</div>
<div class="t" style="left:688.2px;top:325px;font-size:9.6px;font-weight:bold;color:#111;font-style:normal;-webkit-text-stroke:0.2px #111;">D</div>
<div class="t" style="left:688.2px;top:348px;font-size:9.6px;font-weight:bold;color:#111;font-style:normal;-webkit-text-stroke:0.2px #111;">M</div>
<div class="t" style="left:688.2px;top:371px;font-size:9.6px;font-weight:bold;color:#111;font-style:normal;-webkit-text-stroke:0.2px #111;">P</div>
<div class="t" style="left:688.2px;top:395px;font-size:9.6px;font-weight:bold;color:#111;font-style:normal;-webkit-text-stroke:0.2px #111;">W</div>
<div class="t" style="left:688.2px;top:425px;font-size:9.3px;font-weight:bold;color:#111;font-style:normal;letter-spacing:-0.057px;">NAME</div>
<div class="r" style="left:688.2px;top:437.2px;width:222.7px;height:21.1px;background:#fff;border:1px solid #e6e6e6;border-radius:2px;box-sizing:border-box;"></div>
<div class="t" style="left:692px;top:444px;font-size:9px;font-weight:normal;color:#b5b5b5;font-style:normal;">Name ...</div>
<div class="t" style="left:688.2px;top:474px;font-size:9.3px;font-weight:bold;color:#111;font-style:normal;letter-spacing:-0.135px;">Firmenname</div>
<div class="r" style="left:688.2px;top:487px;width:222.7px;height:20.6px;background:#fff;border:1px solid #e6e6e6;border-radius:2px;box-sizing:border-box;"></div>
<div class="t" style="left:692px;top:493px;font-size:9px;font-weight:normal;color:#b5b5b5;font-style:normal;">Firmenname ...</div>
</body></html>
